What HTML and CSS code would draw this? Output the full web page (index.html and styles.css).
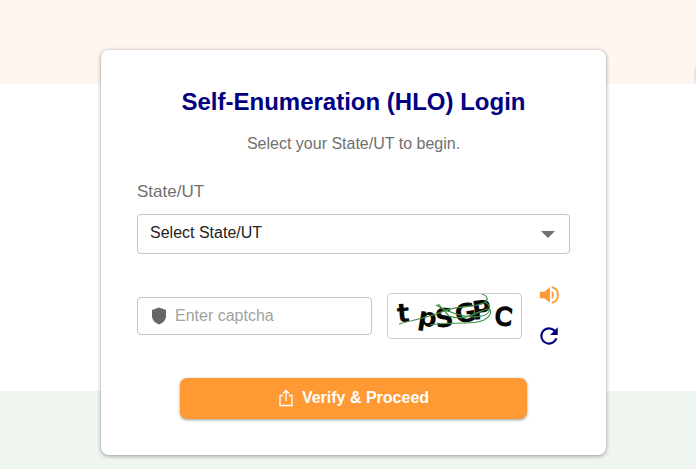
FILE: index.html
```html
<!DOCTYPE html>
<html lang="en">
<head>
    <meta charset="UTF-8">
    <meta name="viewport" content="width=device-width, initial-scale=1.0">
    <title>Self-Enumeration (HLO) Login</title>
    <link rel="stylesheet" href="styles.css">
</head>
<body>
    <main class="page">
        <form class="login-card">
            <h1>Self-Enumeration (HLO) Login</h1>
            <p class="subtitle">Select your State/UT to begin.</p>

            <label class="field-label" for="state">State/UT</label>
            <div class="select-box">
                <select id="state" name="state">
                    <option>Select State/UT</option>
                </select>
                <svg class="arrow" viewBox="0 0 14 7" aria-hidden="true"><path d="M0 0h14L7 7z"/></svg>
            </div>

            <div class="captcha-row">
                <div class="captcha-input">
                    <svg class="shield" viewBox="0 0 16 18" aria-hidden="true"><path d="M8 0.5L15 3v6c0 4-3 7-7 8.500C4 16 1 13 1 9V3z"/></svg>
                    <input type="text" name="captcha" placeholder="Enter captcha" aria-label="Enter captcha">
                </div>
                <svg class="captcha-image" viewBox="0 0 133 44" role="img" aria-label="Captcha">
                    <g class="captcha-letters">
                        <text x="9" y="28" transform="rotate(-5 15 20)">t</text>
                        <text x="30" y="32" transform="rotate(10 38 26)">p</text>
                        <text x="47" y="33" transform="rotate(-5 57 24)">S</text>
                        <text x="67" y="28" transform="rotate(-10 78 20)">G</text>
                        <text x="84" y="25" transform="rotate(-6 94 16)">P</text>
                        <text class="thin" x="107" y="31" transform="rotate(6 117 23)">C</text>
                    </g>
                    <g class="captcha-lines">
                        <path d="M11 30C24 26 40 24 56 17C70 11 85 14 96 9C101 6 100 2 94 0"/>
                        <path d="M42 31C60 27 84 32 96 26C105 21 104 14 99 15C89 18 75 28 61 22L50 10"/>
                        <path d="M48 11C63 20 82 25 94 22C103 20 104 12 97 8"/>
                    </g>
                </svg>
                <div class="captcha-actions">
                    <button type="button" class="icon-button speak" aria-label="Play captcha audio">
                        <svg viewBox="0 0 24 24"><path d="M2 8.500v7h5l6 5V3.500l-6 5z"/><path d="M15 7.500v9c3-2 3-7 0-9z"/><path class="wave" d="M15 3.500c9 2 9 15 0 17"/></svg>
                    </button>
                    <button type="button" class="icon-button refresh" aria-label="Refresh captcha">
                        <svg viewBox="1 1 22 22"><path d="M17.650 6.350A7.950 7.950 0 0 0 12 4a8 8 0 1 0 7.730 10h-2.080A6 6 0 1 1 12 6c1.660 0 3.140.69 4.220 1.780L13 11h7V4z"/></svg>
                    </button>
                </div>
            </div>

            <button type="submit" class="submit-button">
                <svg viewBox="0 0 16 18" aria-hidden="true"><path d="M5 6.500H2v10h12v-10h-3M8 12V1.500M5 4.500l3-3 3 3"/></svg>
                Verify &amp; Proceed
            </button>
        </form>
    </main>
    <span class="edge-tab"></span>
</body>
</html>
```

FILE: styles.css
```css
* {
    box-sizing: border-box;
}
body {
    font-family: "Liberation Sans", Arial, sans-serif;
    font-size: 16px;
    margin: 0;
    color: #222;
    overflow-x: hidden;
}
.page {
    min-height: 100vh;
    padding: 50px 90px 14px 101px;
    /* saffron, white and green bands */
    background: linear-gradient(#fff5f1 18%, #fff 18%, #fff 83.4%, #eff6ef 83.4%);
}
.login-card {
    padding: 36px;
    background: #fff;
    border-radius: 8px;
    box-shadow: 0 1px 4px rgba(0, 0, 0, 0.4);
}
h1 {
    margin: 0 0 16px;
    font-size: 24px;
    line-height: 32px;
    text-align: center;
    color: #000080;
}
.subtitle {
    margin: 0 0 28px;
    line-height: 20px;
    text-align: center;
    color: #707070;
}
.field-label {
    display: block;
    margin-bottom: 12px;
    font-size: 17px;
    line-height: 20px;
    color: #707070;
}
.select-box {
    position: relative;
}
.select-box select {
    width: 100%;
    height: 40px;
    padding: 0 40px 3px 12px;
    border: 1px solid #c4c4c4;
    border-radius: 4px;
    background: #fff;
    color: #222;
    font-family: inherit;
    font-size: 16px;
    appearance: none;
}
.select-box .arrow {
    position: absolute;
    right: 15px;
    top: 17px;
    width: 14px;
    height: 7px;
    fill: #707070;
    pointer-events: none;
}
.captcha-row {
    display: flex;
    align-items: center;
    gap: 15px;
    margin: 29px 9px 30px 0;
}
.captcha-input {
    flex: 1;
    min-width: 0;
    display: flex;
    align-items: center;
    gap: 8px;
    height: 38px;
    padding: 0 13px;
    border: 1px solid #c8c8c8;
    border-radius: 4px;
}
.captcha-input .shield {
    flex: none;
    width: 16px;
    height: 18px;
    fill: #666;
}
.captcha-input input {
    flex: 1;
    min-width: 0;
    padding: 0;
    border: none;
    outline: none;
    background: none;
    font-family: inherit;
    font-size: 16px;
}
.captcha-input input::placeholder {
    color: #a2a2a2;
}
.captcha-image {
    flex: none;
    width: 135px;
    height: 46px;
    border: 1px solid #ccc;
    border-radius: 4px;
}
.captcha-letters {
    font-family: "DejaVu Sans", sans-serif;
    font-size: 26px;
    font-weight: bold;
    fill: #080808;
}
.captcha-letters .thin {
    font-size: 24px;
    font-weight: normal;
    stroke: #080808;
    stroke-width: 2;
}
.captcha-lines {
    fill: none;
    stroke: #3f8f44;
    stroke-width: 1.2;
}
.captcha-actions {
    display: flex;
    flex-direction: column;
    gap: 17px;
}
.icon-button {
    width: 24px;
    height: 24px;
    padding: 0;
    border: none;
    background: none;
    cursor: pointer;
}
.icon-button svg {
    display: block;
    width: 22px;
    height: 22px;
    margin: 0 auto;
}
.speak {
    color: #ff9933;
}
.refresh {
    color: #000080;
}
.refresh svg {
    width: 24px;
    height: 24px;
}
.icon-button path {
    fill: currentColor;
}
.icon-button .wave {
    fill: none;
    stroke: currentColor;
    stroke-width: 2;
}
.submit-button {
    display: flex;
    align-items: center;
    justify-content: center;
    gap: 8px;
    width: 80%;
    height: 41px;
    margin: 0 auto;
    padding: 0 0 2px;
    border: none;
    border-radius: 7px;
    background: #ff9933;
    box-shadow: 0 1px 3px rgba(0, 0, 0, 0.4);
    color: #fff;
    font-family: inherit;
    font-size: 16px;
    font-weight: bold;
    cursor: pointer;
}
.submit-button svg {
    width: 16px;
    height: 18px;
    fill: none;
    stroke: #fff;
    stroke-width: 1.3;
}
/* collapsed tab at the window edge, only its shadow shows */
.edge-tab {
    position: absolute;
    top: 68px;
    right: -7px;
    width: 6px;
    height: 14px;
    box-shadow: 0 0 4px rgba(0, 0, 0, 0.4);
}
```
